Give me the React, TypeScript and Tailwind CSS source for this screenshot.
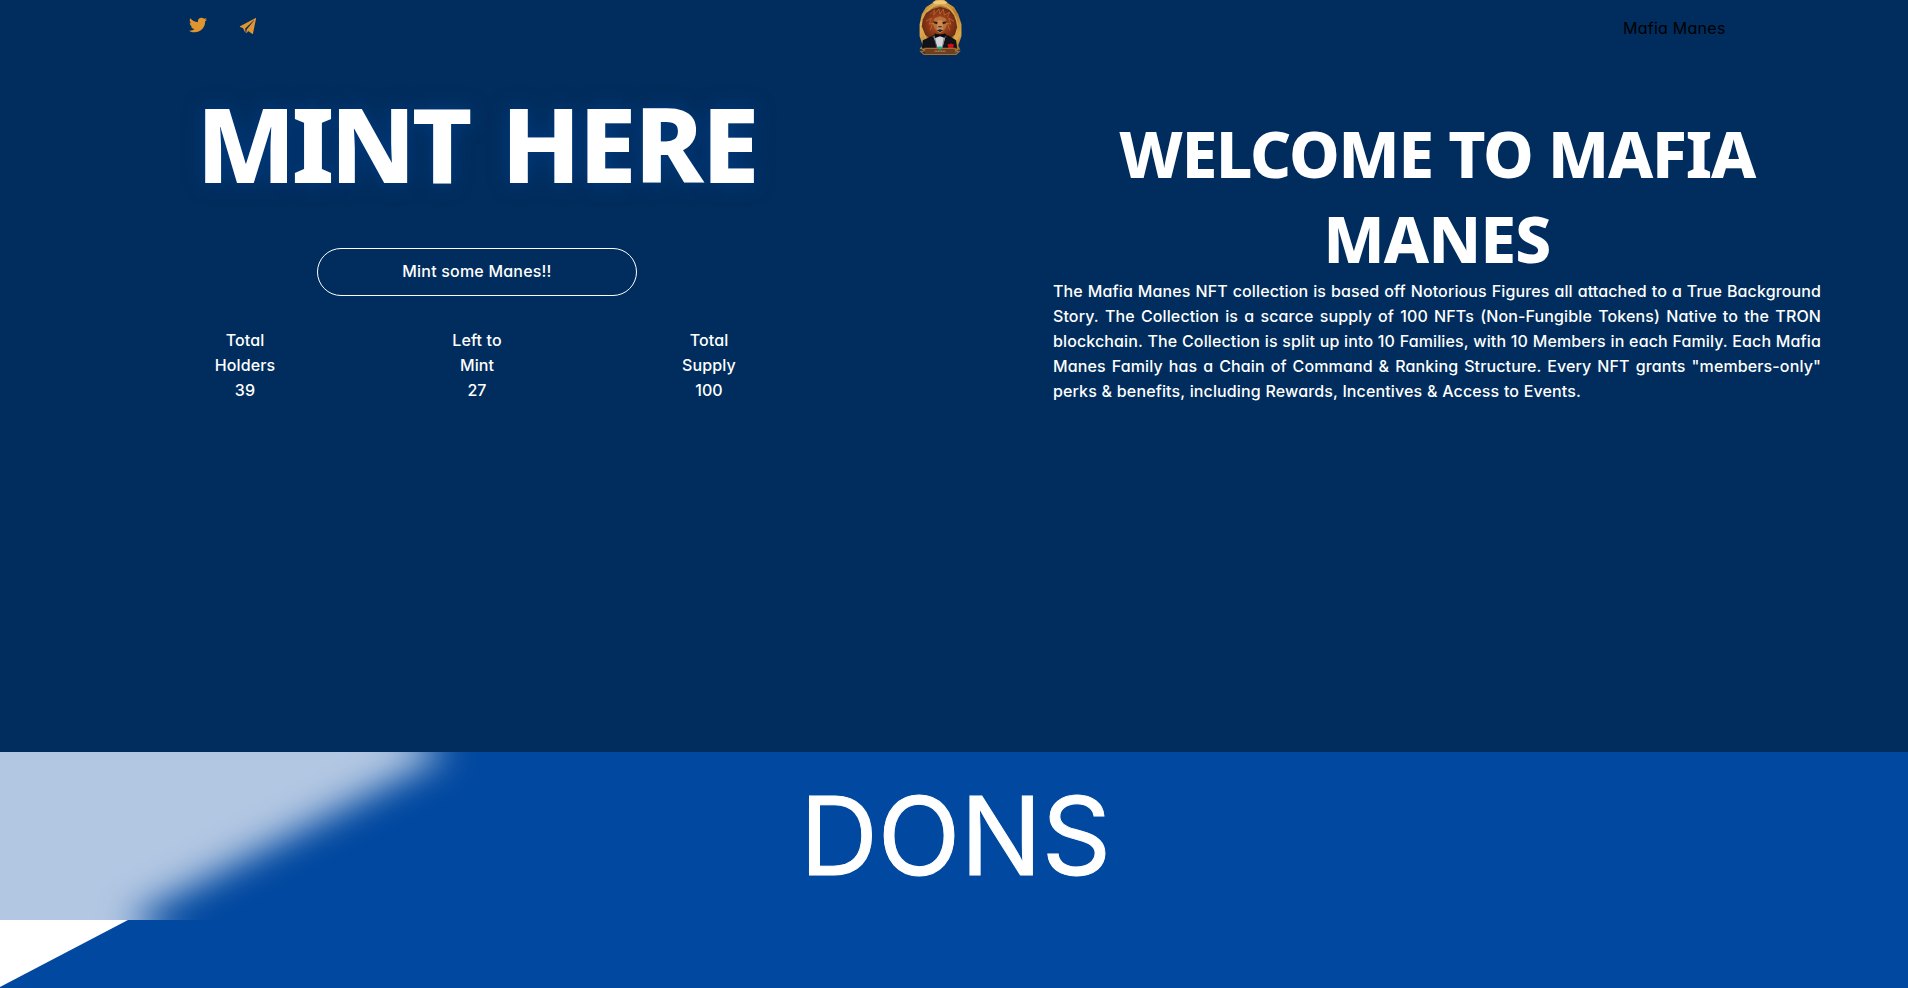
import { FaTwitter } from "react-icons/fa";
import { IoIosPaperPlane } from "react-icons/io";

const STORY = [
  "The Mafia Manes NFT collection is based off Notorious Figures all attached to a True Background",
  "Story. The Collection is a scarce supply of 100 NFTs (Non-Fungible Tokens) Native to the TRON",
  "blockchain. The Collection is split up into 10 Families, with 10 Members in each Family. Each Mafia",
  'Manes Family has a Chain of Command & Ranking Structure. Every NFT grants "members-only"',
];

const STATS = [
  { top: "Total", bottom: "Holders", value: "39" },
  { top: "Left to", bottom: "Mint", value: "27" },
  { top: "Total", bottom: "Supply", value: "100" },
];

function LionLogo() {
  return (
    <svg viewBox="1.500 0 41 55.500" preserveAspectRatio="none" className="h-14 w-11" aria-hidden="true">
      <defs>
        <linearGradient id="gold" x1="0" y1="0" x2="1" y2="1">
          <stop offset="0" stopColor="#8a5a1c" />
          <stop offset="0.25" stopColor="#e8b55a" />
          <stop offset="0.55" stopColor="#b87c2a" />
          <stop offset="0.8" stopColor="#e0a848" />
          <stop offset="1" stopColor="#7c4c16" />
        </linearGradient>
        <radialGradient id="mane">
          <stop offset="0" stopColor="#b5622c" />
          <stop offset="0.6" stopColor="#8f3a17" />
          <stop offset="1" stopColor="#6b2a12" />
        </radialGradient>
      </defs>
      <path d="M15 3 18 0h8l3 3 6 4 4 7 3 10v12l-3 9 2 4-3 1-1 3H9l-2-3-4-2 3-3-3-9V24l2-10 4-7z" fill="url(#gold)" />
      <ellipse cx="22" cy="26" rx="16.5" ry="22" fill="#d9a94e" />
      <ellipse cx="22" cy="26" rx="15" ry="20.5" fill="#a8783a" />
      <path d="M15 2q7-3 14 0l-2 2H17z" fill="#f0c878" />
      <path d="m22 7 4 1 5 2 4 5 2 6 1 6-2 7-5 5-5 2h-8l-5-2-5-5-3-8 1-7 3-6 6-4z" fill="url(#mane)" />
      <path d="m13 14 4-4-1 5 5-6 1 5 3-5 1 6 5-3-2 5M9 21l5-3-2 6 3-1-2 7m22-9-5-3 2 6-3-1 2 7" fill="none" stroke="#d9783c" strokeWidth="0.8" opacity="0.7" />
      <path d="m17 18 5-2 5 2 2 5-2 5-3 4h-4l-3-4-2-5z" fill="#b9703a" />
      <path d="m15.500 21 5 1-1 2-3-1zm13 0-5 1 1 2 3-1z" fill="#2b1710" />
      <path d="M20 20h4l1 7h-6z" fill="#cf8a50" />
      <path d="M20 26h4l-2 2z" fill="#321a14" />
      <path d="m19 28 3-1 3 1-1 3-2 2-2-2z" fill="#b89474" />
      <path d="m19 30 3-1 3 1-3 2z" fill="#3c1c16" />
      <path d="m5 48 1-8 8-4 4-2h9l4 2 6 4 1 8z" fill="#111217" />
      <path d="m18 34 4 2 4-2 1 3-3 11h-4l-4-11z" fill="#d4d5da" />
      <path d="m17 33 5 2 5-2v5l-5-2-5 2z" fill="#08090c" />
      <path d="m15 36 2 1 2 11M28 36l-2 1-2 11" fill="none" stroke="#62656e" strokeWidth="0.7" />
      <path d="m29 44 3-1 3 1-1 4h-4z" fill="#d20e1b" />
      <path d="M7 48h30l-1 6H8z" fill="#6d3f20" />
      <path d="M4 51q4 0 4-3h28q0 3 4 3l-3 3H7z" fill="none" stroke="#a36d30" strokeWidth="1.2" />
      <path d="M17 50.7h10" stroke="#d6b98c" strokeWidth="0.8" strokeDasharray="1 0.5" />
      <path d="M20.5 46h3l.5 1.5-2 2-2-2z" fill="#14b38c" />
    </svg>
  );
}

export default function App() {
  return (
    <main className="flex h-[988px] w-full flex-col overflow-hidden bg-white font-['Inter',sans-serif] text-[16px] leading-[25px] font-medium text-white [font-feature-settings:'cv11']">
      <div className="h-[752px] shrink-0 bg-[#002d5d]">
        <header className="grid h-14 grid-cols-[918px_44px_1fr]">
          <div className="flex gap-[31px] pt-4 pl-[189px] text-[#e09530]">
            <FaTwitter className="size-[18px]" />
            <IoIosPaperPlane className="size-[20px]" />
          </div>
          <LionLogo />
          <div className="flex pt-4 pl-[661px] text-black">
            <span className="font-normal tracking-[0.25px] whitespace-nowrap">Mafia Manes</span>
          </div>
        </header>

        <div className="grid grid-cols-[954px_954px]">
          <section className="flex flex-col items-center pt-4">
            <h1 className="font-['Noto_Sans',sans-serif] text-[104px] leading-[142px] font-extrabold tracking-[-2px] whitespace-nowrap [word-spacing:8px] [text-shadow:0_0_20px_#0048a088]">
              <span className="tracking-[-4.2px]">MINT</span> HERE
            </h1>
            <button className="mt-[34px] h-12 w-80 rounded-full border border-white pb-0.5 tracking-[0.2px]">
              Mint some Manes!!
            </button>
            <dl className="mt-8 grid w-[696px] grid-cols-3 text-center tracking-[0.12px]">
              {STATS.map((s) => (
                <div key={s.bottom}>
                  <dt>
                    {s.top}
                    <br />
                    {s.bottom}
                  </dt>
                  <dd>{s.value}</dd>
                </div>
              ))}
            </dl>
          </section>

          <section className="flex flex-col items-center pt-[55px] pl-3">
            <h2 className="text-center font-['Noto_Sans',sans-serif] text-[64px] leading-[85px] font-extrabold tracking-[-1.2px] whitespace-nowrap">
              WELCOME TO MAFIA
              <br />
              <span className="tracking-[-0.7px]">MANES</span>
            </h2>
            <div className="mt-[-2px] w-[768px] tracking-[0.12px] whitespace-nowrap">
              {STORY.map((line) => (
                <p key={line} className="[text-align-last:justify]">
                  {line}
                </p>
              ))}
              <p className="w-[528px] [text-align-last:justify]">
                perks &amp; benefits, including Rewards, Incentives &amp; Access to Events.
              </p>
            </div>
          </section>
        </div>
      </div>

      <section className="relative h-[236px] shrink-0 bg-[#0048a0]">
        <svg viewBox="0 0 128 67" className="absolute top-[168px] left-0 h-[67px] w-32" aria-hidden="true">
          <path d="M0 0h128L0 67z" fill="#fff" />
        </svg>
        <div className="relative flex h-[168px] justify-center overflow-hidden pl-[3px]">
          <svg viewBox="-100 -168 600 504" className="absolute top-[-168px] left-[-100px] h-[504px] w-[600px] overflow-visible blur-[18px]" aria-hidden="true">
            <path d="M-200-300H128V-168L450 0 128 168 450 336V450H-200z" fill="#b2c7e2" />
          </svg>
          <h2 className="relative text-[108px] leading-[167px] font-normal whitespace-nowrap [-webkit-text-stroke:1px_white]">DONS</h2>
        </div>
      </section>
    </main>
  );
}
